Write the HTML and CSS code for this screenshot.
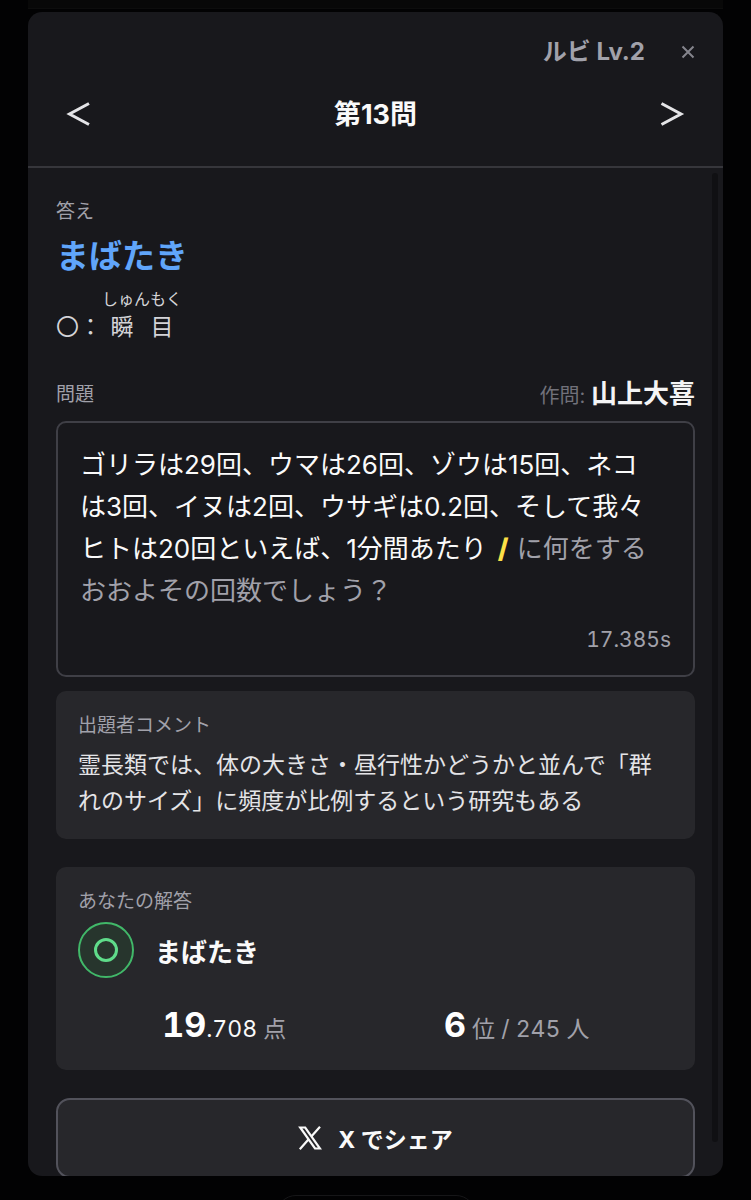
FILE: index.html
```html
<!DOCTYPE html>
<html lang="ja">
    <head>
        <meta charset="UTF-8" />
        <meta name="viewport" content="width=device-width, initial-scale=1.0" />
        <title>第13問</title>
        <link rel="stylesheet" href="styles.css">
    </head>
    <body>
        <div class="page-top"></div>
        <main class="modal">
            <header class="modal-header">
                <div class="tools">
                    <button class="ruby-level">ルビ Lv.2</button>
                    <button class="close" aria-label="閉じる">
                        <svg width="14" height="14" viewBox="0 0 14 14"><path d="M1.5 1.5L12.5 12.5M12.5 1.5L1.5 12.5" /></svg>
                    </button>
                </div>
                <div class="pager">
                    <button class="arrow" aria-label="前の問題">
                        <svg width="26" height="26" viewBox="0 0 26 26"><path d="M23 1.5L3.5 12L23 22.5" /></svg>
                    </button>
                    <h1>第13問</h1>
                    <button class="arrow" aria-label="次の問題">
                        <svg width="26" height="26" viewBox="0 0 26 26"><path d="M2.5 1.5L22 12L2.5 22.5" /></svg>
                    </button>
                </div>
            </header>
            <div class="content">
                <section class="answer">
                    <h2 class="label">答え</h2>
                    <p class="answer-text">まばたき</p>
                    <p class="accepted">〇：<ruby><span>瞬</span><span>目</span><rt>しゅんもく</rt></ruby></p>
                </section>

                <section class="question">
                    <div class="question-head">
                        <h2 class="label">問題</h2>
                        <p class="author">作問: <strong>山上大喜</strong></p>
                    </div>
                    <div class="question-box">
                        <p class="question-text">ゴリラは29回、ウマは26回、ゾウは15回、ネコは3回、イヌは2回、ウサギは0.2回、そして我々ヒトは20回といえば、1分間あたり<span class="slash">/</span><span class="unread">に何をするおおよその回数でしょう？</span></p>
                        <p class="time">17.385s</p>
                    </div>
                </section>

                <section class="card comment">
                    <h2 class="label">出題者コメント</h2>
                    <p class="comment-text">霊長類では、体の大きさ・昼行性かどうかと並んで「群れのサイズ」に頻度が比例するという研究もある</p>
                </section>

                <section class="card result">
                    <h2 class="label">あなたの解答</h2>
                    <div class="my-answer">
                        <span class="mark">
                            <svg width="26" height="26" viewBox="0 0 26 26"><circle cx="13" cy="13" r="10.5" /></svg>
                        </span>
                        <strong>まばたき</strong>
                    </div>
                    <div class="stats">
                        <p><b>19</b><span class="decimal">.708</span> 点</p>
                        <p><b>6</b> 位 / 245 人</p>
                    </div>
                </section>

                <button class="share">
                    <svg width="24" height="24" viewBox="0 0 24 24"><path d="M2.2 1.5H7.2L22 22.5H17ZM22 0.8L14 9.8M10.4 13.6L1.8 23.2" /></svg>
                    X でシェア
                </button>
            </div>
        </main>
        <div class="page-bottom"><div class="page-button"></div></div>
    </body>
</html>
```

FILE: styles.css
```css
* {
    box-sizing: border-box;
}
body {
    display: flex;
    flex-direction: column;
    height: 100vh;
    margin: 0;
    padding: 0 28px;
    overflow: hidden;
    background: #020203;
    color: #fafafa;
    font-family: Inter, "Noto Sans CJK JP", sans-serif;
}
h1,
h2,
p {
    margin: 0;
}
button {
    padding: 0;
    border: 0;
    background: none;
    color: inherit;
    font: inherit;
    cursor: pointer;
}
svg {
    display: block;
    fill: none;
    stroke: currentColor;
}

/* dimmed page behind the modal */
.page-top {
    flex: none;
    height: 9px;
    margin-bottom: 3px;
    background: #080808;
    border-bottom: 1px solid #0d0d0d;
}
.page-bottom {
    flex: none;
    height: 24px;
    padding-top: 19px;
    overflow: hidden;
}
.page-button {
    width: 200px;
    height: 60px;
    margin: 0 auto;
    border: 1px solid #161618;
    border-radius: 20px;
}

.modal {
    position: relative;
    display: flex;
    flex: 1;
    flex-direction: column;
    min-height: 0;
    overflow: hidden;
    border-radius: 14px;
    background: #18181c;
}
.modal-header {
    flex: none;
    padding: 22px 28px 30px;
    border-bottom: 2px solid #36363b;
}
.tools {
    display: flex;
    align-items: center;
    justify-content: flex-end;
    gap: 36px;
    height: 36px;
}
.ruby-level {
    color: #a1a1aa;
    font-size: 24px;
    font-weight: 700;
    line-height: 32px;
}
.close {
    color: #85858d;
}
.close svg {
    stroke-width: 2;
}
.pager {
    display: flex;
    align-items: center;
    justify-content: space-between;
    height: 42px;
    margin-top: 24px;
    padding: 0 10px;
}
.pager h1 {
    font-size: 27px;
    font-weight: 700;
    line-height: 38px;
}
.arrow {
    color: #e4e4e7;
}
.arrow svg {
    stroke-width: 3;
}

.content {
    flex: 1;
    min-height: 0;
    padding: 30px 28px;
    overflow: hidden;
}
/* scrollbar track */
.content::after {
    content: "";
    position: absolute;
    top: 161px;
    right: 5px;
    bottom: 34px;
    width: 6px;
    border-radius: 3px;
    background: #101013;
}

.label {
    color: #a1a1aa;
    font-size: 19px;
    font-weight: 400;
    line-height: 28px;
}
.answer-text {
    margin-top: 6px;
    color: #60a5fa;
    font-size: 33px;
    font-weight: 700;
    line-height: 48px;
}
.accepted {
    display: flex;
    align-items: flex-end;
    margin-top: 7px;
    color: #d4d4d8;
    font-size: 23px;
    line-height: 32px;
}
.accepted ruby {
    display: grid;
    grid-template-columns: 1fr 1fr;
    text-align: center;
}
.accepted rt {
    display: block;
    grid-row: 1;
    grid-column: 1 / 3;
    font-size: 16px;
    line-height: 24px;
}

.question {
    margin-top: 34px;
}
.question-head {
    display: flex;
    align-items: center;
    justify-content: space-between;
    height: 36px;
}
.author {
    color: #71717a;
    font-size: 20px;
    line-height: 36px;
}
.author strong {
    color: #f4f4f5;
    font-size: 26px;
}
.question-box {
    margin-top: 8px;
    padding: 21px 22px 19px;
    border: 2px solid #3f3f46;
    border-radius: 10px;
}
.question-text {
    padding-right: 16px;
    font-size: 26px;
    line-height: 42px;
}
.slash {
    margin: 0 8px 0 11px;
    color: #fde047;
    font-size: 27px;
    font-weight: 800;
    line-height: 1;
}
.unread {
    color: #a1a1aa;
}
.time {
    margin-top: 12px;
    color: #a1a1aa;
    font-size: 21px;
    font-variant-numeric: tabular-nums;
    line-height: 32px;
    text-align: right;
}

.card {
    padding: 21px 22px 20px;
    border-radius: 10px;
    background: #27272b;
}
.comment {
    margin-top: 14px;
}
.comment-text {
    margin-top: 7px;
    color: #e4e4e7;
    font-size: 23px;
    line-height: 36px;
}

.result {
    margin-top: 28px;
}
.my-answer {
    display: flex;
    align-items: center;
    gap: 21px;
    margin-top: 6px;
    font-size: 26px;
}
.mark {
    display: grid;
    place-items: center;
    width: 56px;
    height: 56px;
    border: 2px solid #41b869;
    border-radius: 50%;
    background: #27352d;
    color: #5fdc8a;
}
.mark svg {
    stroke-width: 3;
}
.stats {
    display: grid;
    grid-template-columns: 1fr 1fr;
    height: 50px;
    margin-top: 22px;
    padding-right: 10px;
    color: #a1a1aa;
    font-size: 23px;
    font-variant-numeric: tabular-nums;
    line-height: 50px;
    text-align: center;
}
.stats b {
    color: #fff;
    font-size: 34px;
}
.decimal {
    color: #fafafa;
}

.share {
    display: flex;
    align-items: center;
    justify-content: center;
    gap: 16px;
    width: 100%;
    height: 80px;
    margin-top: 28px;
    border: 2px solid #52525b;
    border-radius: 14px;
    background: #27272b;
    font-size: 23px;
    font-weight: 700;
}
.share svg {
    stroke-width: 2.2;
}
```
